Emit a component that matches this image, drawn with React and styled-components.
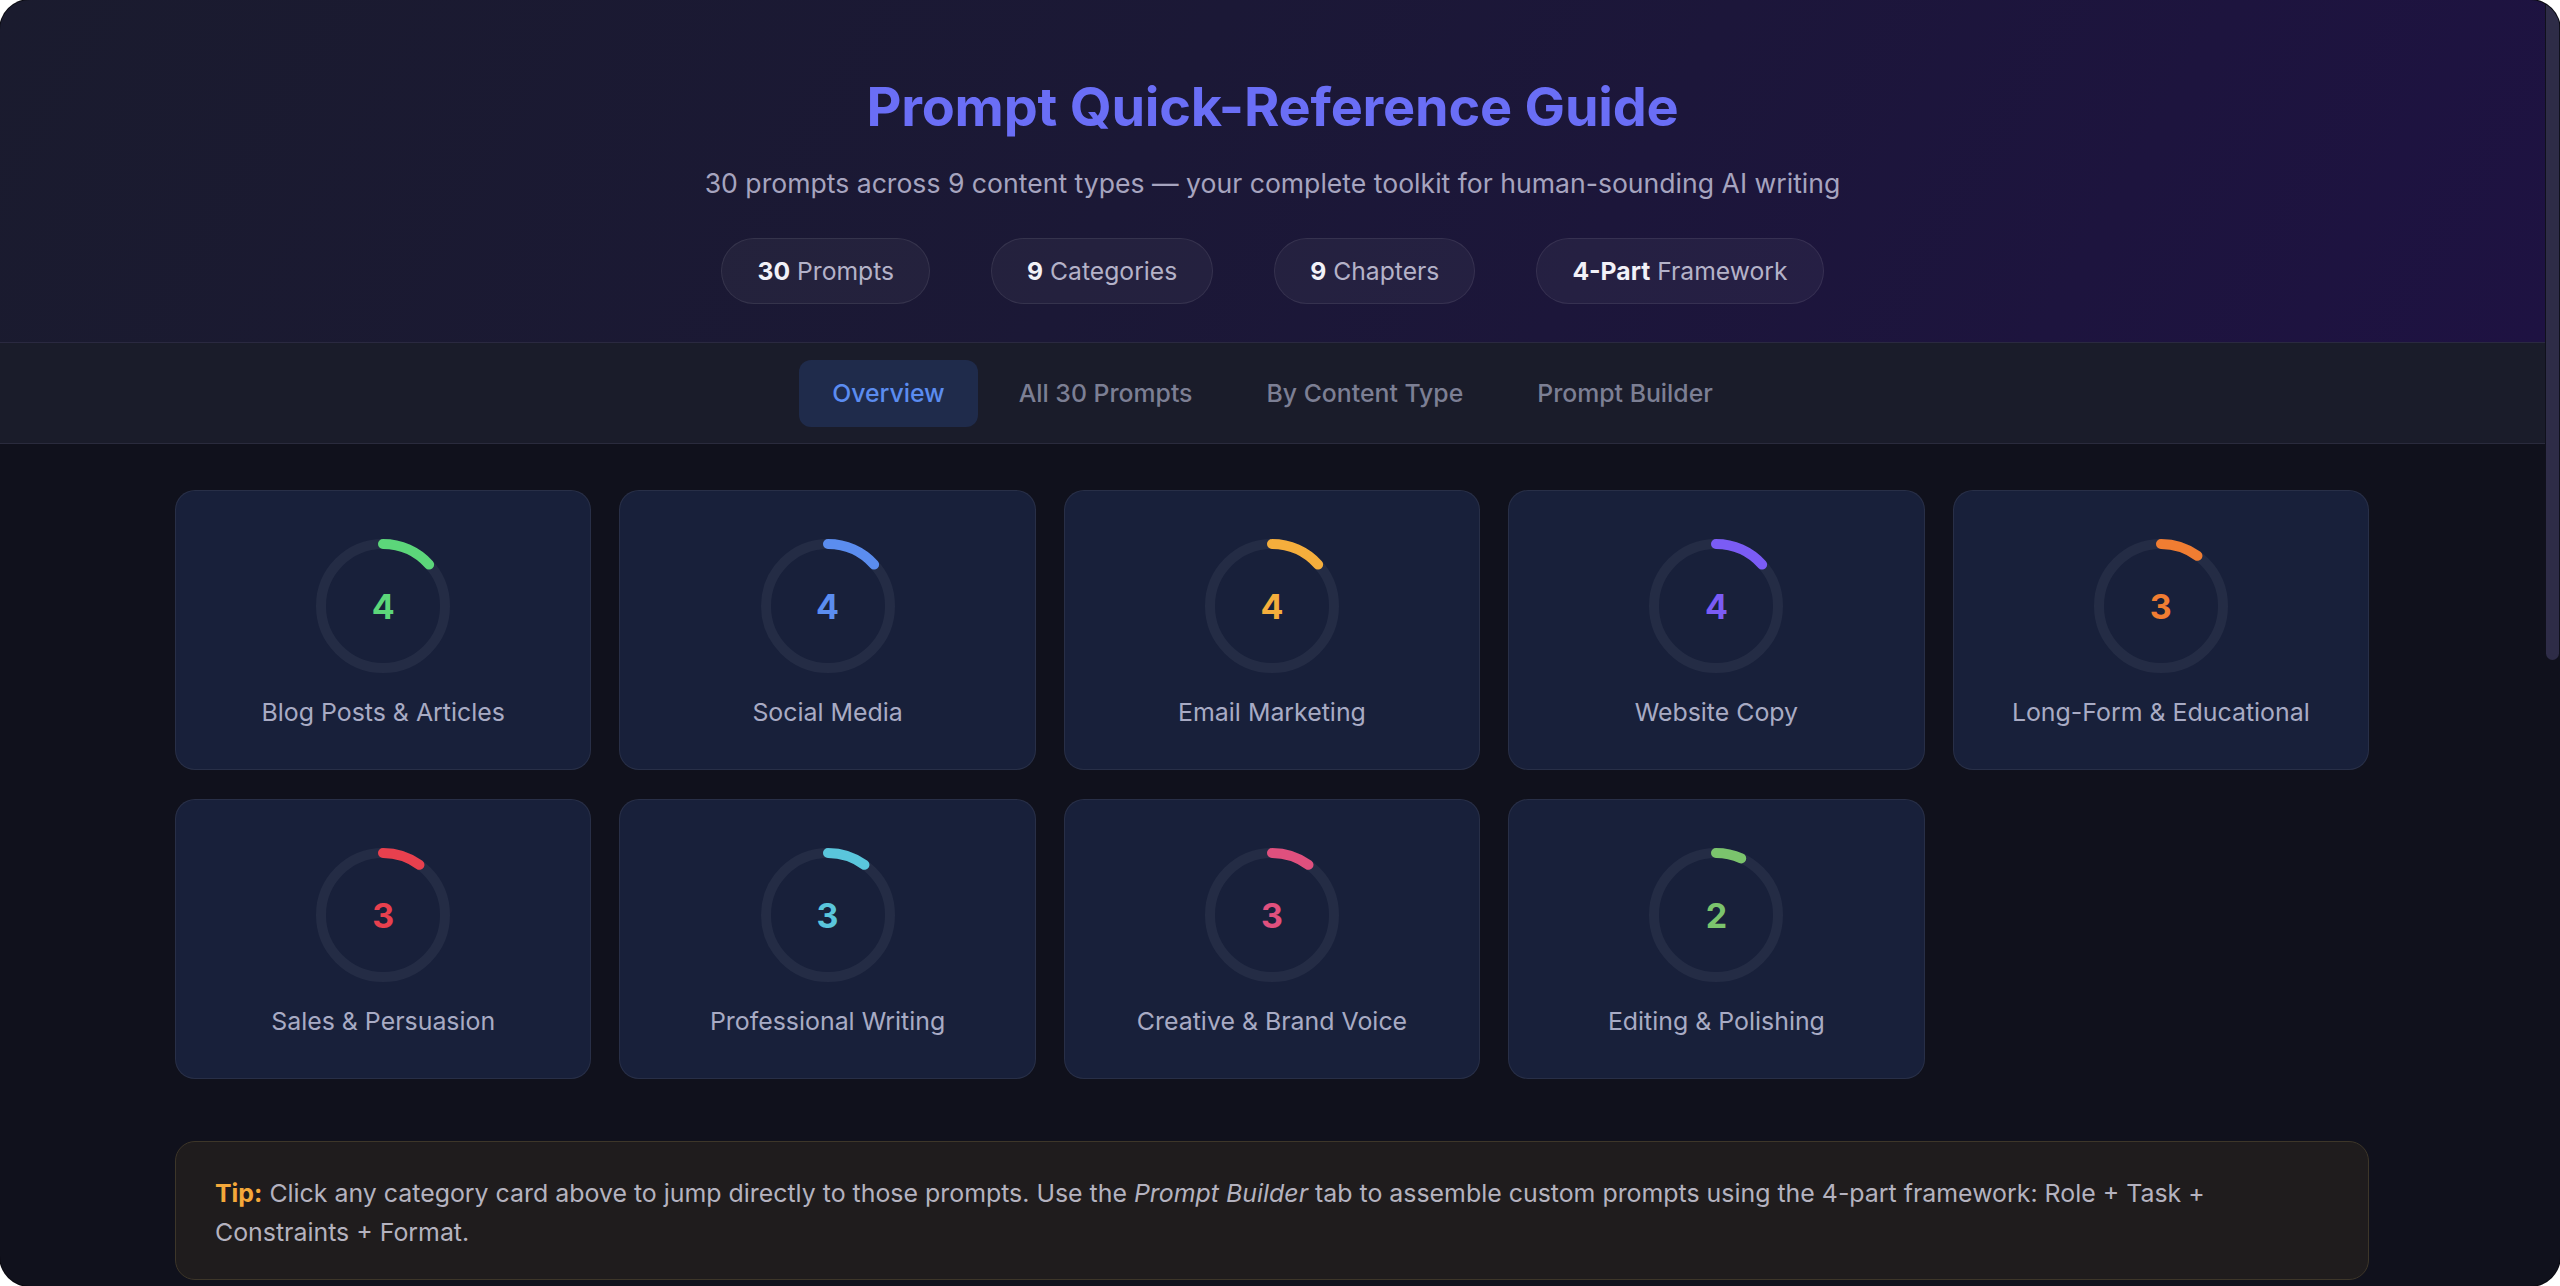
import React from "react";
import styled, { createGlobalStyle } from "styled-components";

const Global = createGlobalStyle`
  html, body { margin: 0; padding: 0; background: #ffffff; }
  body { font-family: Inter, "Noto Sans", "Liberation Sans", sans-serif; }
  * { box-sizing: border-box; }
`;

const Frame = styled.div`
  width: 2560px;
  height: 1286px;
  border-radius: 30px;
  overflow: hidden;
  display: flex;
  background: #10111c;
  box-shadow: 0 0 0 1px #0a0a10;
`;

const Page = styled.div`
  flex: 1;
  min-width: 0;
  display: flex;
  flex-direction: column;
  overflow: hidden;
  & > * { flex-shrink: 0; }
`;

const ScrollTrack = styled.div`
  width: 15px;
  flex: none;
  background: #10111c;
  display: flex;
  flex-direction: column;
  padding: 0 1px;
`;

const ScrollThumb = styled.div`
  height: 660px;
  width: 100%;
  background: #2e2c47;
  border-radius: 0 0 8px 8px;
`;

const Header = styled.header`
  background: linear-gradient(120deg, #1a1b2e 0%, #1b1836 45%, #1e1242 100%);
  padding: 75px 0 38px;
  display: flex;
  flex-direction: column;
  align-items: center;
  border-bottom: 1px solid #2a2940;
`;

const Title = styled.h1`
  margin: 0;
  font-size: 54px;
  line-height: 64px;
  font-weight: 700;
  color: #6a6ef6;
  letter-spacing: -0.2px;
`;

const Subtitle = styled.p`
  margin: 25px 0 0;
  font-size: 26.6px;
  line-height: 38px;
  color: #a6a4bf;
`;

const Pills = styled.div`
  margin-top: 36px;
  display: flex;
  gap: 61px;
`;

const Pill = styled.div`
  height: 66px;
  padding: 0 35px;
  display: flex;
  align-items: center;
  border-radius: 33px;
  background: rgba(255, 255, 255, 0.045);
  border: 1px solid rgba(255, 255, 255, 0.08);
  font-size: 24.7px;
  color: #b4b2c8;
  white-space: pre;
`;

const PillNum = styled.b`
  color: #f2f1f8;
  font-weight: 700;
`;

const Nav = styled.nav`
  height: 101px;
  background: #1a1c2a;
  border-bottom: 1px solid #2a2b3d;
  display: flex;
  align-items: center;
  justify-content: center;
  gap: 8px;
`;

const Tab = styled.div`
  height: 67px;
  padding: 0 33px;
  display: flex;
  align-items: center;
  border-radius: 12px;
  font-size: 24.8px;
  font-weight: 500;
  color: ${(p) => (p.$active ? "#5b8cf0" : "#7c7f94")};
  background: ${(p) => (p.$active ? "#1f2b4b" : "transparent")};
`;

const Main = styled.main`
  padding: 46px 176px 0 175px;
  display: flex;
  flex-direction: column;
`;

const Grid = styled.div`
  display: grid;
  grid-template-columns: repeat(5, 1fr);
  gap: 29px 28px;
`;

const Card = styled.div`
  height: 280px;
  background: #18203a;
  border: 1px solid rgba(255, 255, 255, 0.07);
  border-radius: 20px;
  display: flex;
  flex-direction: column;
  align-items: center;
  padding-top: 48px;
`;

const RingWrap = styled.div`
  width: 134px;
  height: 134px;
  display: grid;
  place-items: center;
  & > * { grid-area: 1 / 1; }
`;

const RingSvg = styled.svg`
  width: 134px;
  height: 134px;
  transform: rotate(-90deg);
`;

const RingNum = styled.span`
  font-size: 34px;
  font-weight: 700;
  color: ${(p) => p.$color};
`;

const CardLabel = styled.div`
  margin-top: 24px;
  font-size: 24.9px;
  line-height: 30px;
  color: #a8abc4;
`;

const Tip = styled.div`
  margin-top: 62px;
  background: #1f1c1d;
  border: 1px solid #3d3629;
  border-radius: 20px;
  padding: 32px 39px 27px;
  font-size: 24.9px;
  line-height: 39px;
  color: #b4b2bf;
`;

const TipLabel = styled.b`
  color: #f5a83a;
  font-weight: 700;
`;

const categories = [
  { n: 4, label: "Blog Posts & Articles", color: "#5cd67a" },
  { n: 4, label: "Social Media", color: "#5b8def" },
  { n: 4, label: "Email Marketing", color: "#f5ae3c" },
  { n: 4, label: "Website Copy", color: "#7b5cf5" },
  { n: 3, label: "Long-Form & Educational", color: "#f07d32" },
  { n: 3, label: "Sales & Persuasion", color: "#e8404e" },
  { n: 3, label: "Professional Writing", color: "#5ac6dc" },
  { n: 3, label: "Creative & Brand Voice", color: "#e0507e" },
  { n: 2, label: "Editing & Polishing", color: "#7bc46d" },
];

function Ring({ n, color }) {
  const r = 62;
  const c = 2 * Math.PI * r;
  const len = (n / 30) * c;
  return (
    <RingWrap>
      <RingSvg viewBox="0 0 134 134">
        <circle cx="67" cy="67" r={r} fill="none" stroke="#242c45" strokeWidth="10" />
        <circle
          cx="67"
          cy="67"
          r={r}
          fill="none"
          stroke={color}
          strokeWidth="10"
          strokeLinecap="round"
          strokeDasharray={`${len} ${c}`}
        />
      </RingSvg>
      <RingNum $color={color}>{n}</RingNum>
    </RingWrap>
  );
}

export default function App() {
  return (
    <>
      <Global />
      <Frame>
        <Page>
          <Header>
            <Title>Prompt Quick-Reference Guide</Title>
            <Subtitle>
              30 prompts across 9 content types — your complete toolkit for human-sounding AI writing
            </Subtitle>
            <Pills>
              <Pill><PillNum>30</PillNum> Prompts</Pill>
              <Pill><PillNum>9</PillNum> Categories</Pill>
              <Pill><PillNum>9</PillNum> Chapters</Pill>
              <Pill><PillNum>4-Part</PillNum> Framework</Pill>
            </Pills>
          </Header>
          <Nav>
            <Tab $active>Overview</Tab>
            <Tab>All 30 Prompts</Tab>
            <Tab>By Content Type</Tab>
            <Tab>Prompt Builder</Tab>
          </Nav>
          <Main>
            <Grid>
              {categories.map((c) => (
                <Card key={c.label}>
                  <Ring n={c.n} color={c.color} />
                  <CardLabel>{c.label}</CardLabel>
                </Card>
              ))}
            </Grid>
            <Tip>
              <TipLabel>Tip:</TipLabel> Click any category card above to jump directly to those prompts. Use the{" "}
              <i>Prompt Builder</i> tab to assemble custom prompts using the 4-part framework: Role + Task +
              Constraints + Format.
            </Tip>
          </Main>
        </Page>
        <ScrollTrack>
          <ScrollThumb />
        </ScrollTrack>
      </Frame>
    </>
  );
}
